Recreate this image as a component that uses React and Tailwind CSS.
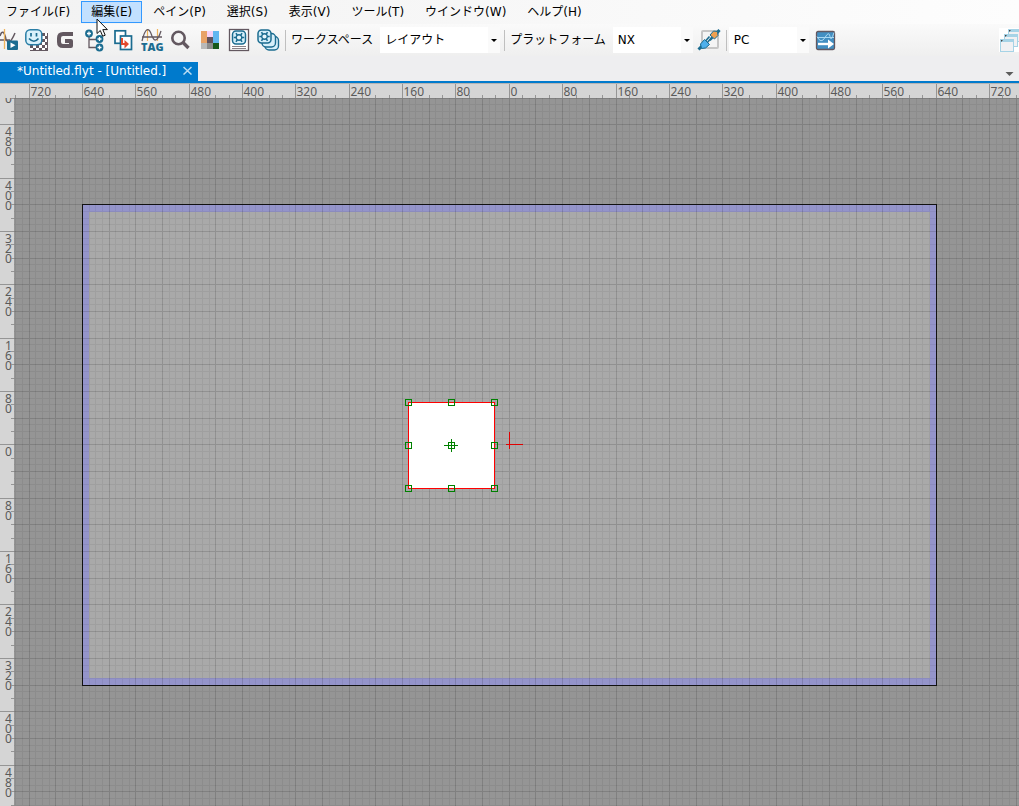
import React, { useLayoutEffect, useRef, useState } from "react";

const GRAY = "#635860";
const TEAL = "#1b6c90";

function Icon({ children }) {
  return (
    <svg className="overflow-visible" width="29" height="24" viewBox="0 0 29 24" fill="none" aria-hidden="true">
      {children}
    </svg>
  );
}

function ToolButton({ label, children }) {
  return (
    <button type="button" aria-label={label} className="h-6 w-[29px] shrink-0">
      <Icon>{children}</Icon>
    </button>
  );
}

function Plus({ x, y }) {
  return (
    <g>
      <circle cx={x} cy={y} r="3.9" fill={TEAL} />
      <path d={`M${x - 2} ${y}h4M${x} ${y - 2}v4`} stroke="#fff" strokeWidth="1.3" />
    </g>
  );
}

function Flower({ x, y }) {
  return (
    <g transform={`translate(${x} ${y})`}>
      <rect x="-6.5" y="-6.5" width="13" height="13" rx="3.5" fill="#d6effa" stroke={TEAL} strokeWidth="1.5" />
      <circle r="2.8" fill="#e8f6fc" stroke={TEAL} strokeWidth="1.4" />
      <path
        d="M-1.8-2.4l-1.2-2M1.8-2.4l1.2-2M-1.8 2.4l-1.2 2M1.8 2.4l1.2 2M-3 0h-2.2M3 0h2.2"
        stroke={TEAL}
        strokeWidth="1.6"
      />
    </g>
  );
}

const checks = [];
for (let r = 0; r < 6; r++)
  for (let c = 0; c < 6; c++) if ((r + c) % 2 === 0) checks.push([8 + c * 3, 5 + r * 3]);

const palette = [
  ["#e8a266", "#f8d2f6", "#62b6f0"],
  ["#e8a266", "#62525c", "#62b6f0"],
  ["#b9b9b9", "#8c8c8c", "#17591c"],
];

function Separator() {
  return <div className="mx-[2px] h-[21px] w-px shrink-0 bg-[#bfbfbf]" />;
}

function Combo({ id, label, options, wide }) {
  return (
    <div className={`relative mr-[2px] h-[26px] shrink-0 bg-white ${wide ? "w-[120px]" : "w-[80px]"}`}>
      <select
        id={id}
        aria-label={label}
        className="h-full w-full appearance-none bg-transparent pr-4 pl-[5px] text-[12px] text-black outline-none"
      >
        {options.map((o) => (
          <option key={o}>{o}</option>
        ))}
      </select>
      <svg
        className="pointer-events-none absolute top-0 right-0 bg-[#fafafa]"
        width="12"
        height="26"
        viewBox="0 0 12 26"
        aria-hidden="true"
      >
        <path d="M3 12h6l-3 3z" fill="#000" />
      </svg>
    </div>
  );
}

const menus = [
  "ファイル(F)",
  "編集(E)",
  "ペイン(P)",
  "選択(S)",
  "表示(V)",
  "ツール(T)",
  "ウインドウ(W)",
  "ヘルプ(H)",
];

// Canvas geometry: origin of the layout inside the drawing area and pixels per layout unit.
const OX = 495.3;
const OY = 346.9;
const SCALE = 0.667;
const RULER = 14;

const px = (origin, units) => Math.floor(origin + units * SCALE) + 0.5;

// All positions on a grid of the given step that fall inside the given length.
function marks(origin, step, length) {
  const out = [];
  const first = Math.ceil(-origin / (step * SCALE));
  for (let i = first; px(origin, i * step) < length; i++) out.push(i * step);
  return out;
}

function useSize() {
  const ref = useRef(null);
  const [size, setSize] = useState({ width: 0, height: 0 });
  useLayoutEffect(() => {
    const measure = () => {
      const r = ref.current.getBoundingClientRect();
      setSize({ width: r.width, height: r.height });
    };
    measure();
    window.addEventListener("resize", measure);
    return () => window.removeEventListener("resize", measure);
  }, []);
  return [ref, size];
}

function TopRuler() {
  const [ref, size] = useSize();
  return (
    <svg ref={ref} className="block h-[15px] w-full overflow-visible bg-[#d5d5d5]" shapeRendering="crispEdges">
      <path d={`M0 .5H${size.width}`} stroke="#b4b4b4" />
      {marks(OX, 20, size.width - RULER).map((t) => {
        const x = px(OX, t) + RULER;
        const major = t % 80 === 0;
        return (
          <g key={t}>
            <path d={`M${x} ${major ? 1 : 12}V15`} stroke="#959595" />
            {major && (
              <text x={x + 1} y="13" className="fill-[#5a5a5a] font-['Noto_Sans',sans-serif] text-[12px]">
                {Math.abs(t)}
              </text>
            )}
          </g>
        );
      })}
    </svg>
  );
}

function SideRuler() {
  const [ref, size] = useSize();
  const visible = marks(OY + 40, 20, size.height + 40);
  return (
    <svg ref={ref} className="w-[14px] shrink-0 bg-[#d5d5d5]" shapeRendering="crispEdges">
      {visible.map((t) => {
        const y = px(OY, t);
        const major = t % 80 === 0;
        return (
          <g key={t}>
            <path d={`M${major ? 0 : 11} ${y}H14`} stroke="#959595" />
            {major && (
              <text className="fill-[#5a5a5a] font-['Noto_Sans',sans-serif] text-[12px]">
                {String(Math.abs(t))
                  .split("")
                  .map((c, i) => ({ c, base: Math.floor(y) + 12 + i * 10 }))
                  .filter(({ base }) => base > 0)
                  .map(({ c, base }) => (
                    <tspan key={base} x="5" y={base}>
                      {c}
                    </tspan>
                  ))}
              </text>
            )}
          </g>
        );
      })}
    </svg>
  );
}

const box = { x: 394.5, y: 304.5, size: 86 };
const handles = [];
for (const r of [0, 1, 2]) for (const c of [0, 1, 2]) handles.push([box.x + c * 43 - 3, box.y + r * 43 - 3]);

function gridPath(step, skip, size) {
  const keep = (t) => !skip || t % skip !== 0;
  const xs = marks(OX, step, size.width).filter(keep);
  const ys = marks(OY, step, size.height).filter(keep);
  return (
    xs.map((t) => `M${px(OX, t)} 0V${size.height}`).join("") +
    ys.map((t) => `M0 ${px(OY, t)}H${size.width}`).join("")
  );
}

function Canvas() {
  const [ref, size] = useSize();
  return (
    <svg ref={ref} className="min-w-0 flex-1 bg-[#959595]" shapeRendering="crispEdges" fill="none">
      <rect x="68.5" y="106.5" width="854" height="481" fill="#9494ca" />
      <rect x="75" y="114" width="841" height="466" fill="#a9a9a9" />
      <path d={gridPath(10, 40, size)} stroke="#000" strokeOpacity=".06" />
      <path d={gridPath(40, 0, size)} stroke="#000" strokeOpacity=".14" />
      <rect x="68.5" y="106.5" width="854" height="481" stroke="#111" />
      <rect x={box.x} y={box.y} width={box.size} height={box.size} fill="#fff" stroke="#f00" />
      {handles.map(([x, y], i) => (
        <rect key={i} x={x} y={y} width="6" height="6" stroke="#008000" />
      ))}
      <path d="M430 347.5h14M437.5 341v13" stroke="#008000" />
      <path d="M492 346.5h17M495.5 334v17" stroke="#e00000" />
    </svg>
  );
}

export default function App() {
  return (
    <div className="relative flex min-h-screen flex-col overflow-hidden bg-[#eeeef0] font-['DejaVu_Sans','Noto_Sans_CJK_JP',sans-serif] text-[12px] text-black">
      <nav className="-ml-1 flex h-6 items-center gap-px bg-linear-to-r from-[#f2f2f2] to-[#fdfdfd]">
        {menus.map((m, i) => (
          <button
            key={m}
            type="button"
            className={`flex h-[22px] shrink-0 items-center border px-[9px] leading-none whitespace-nowrap ${
              i === 1 ? "border-[#3399ff] bg-[#c2e0ff]" : "border-transparent"
            }`}
          >
            {m}
          </button>
        ))}
      </nav>

      <div className="-ml-[7px] flex h-8 items-center bg-linear-to-b from-[#fafafa] to-[#efefef]">
        <ToolButton label="カーブ再生">
          <path d="M7 12h10M7 8q3-9 6 3 3 8 9-6" stroke={GRAY} strokeWidth="1.5" />
          <path d="M11.5 1v20" stroke="#efb45c" strokeWidth="1.3" />
          <rect x="14" y="12.5" width="11" height="9.5" rx="1" fill={TEAL} />
          <path d="M17.5 14.5v5.5l5-2.8z" fill="#fff" />
        </ToolButton>
        <ToolButton label="背景">
          <rect x="8" y="5" width="18" height="18" fill="#fff" />
          {checks.map(([x, y]) => (
            <rect key={`${x}-${y}`} x={x} y={y} width="3" height="3" fill={GRAY} />
          ))}
          <path d="M25.5 5v17.5H8" stroke={GRAY} />
          <rect x="3.8" y="1.8" width="16" height="15" rx="4.5" fill="#d9f1fb" stroke="#2a7ea6" strokeWidth="1.5" />
          <path d="M9 5v3.5M14.5 5v3.5M7 10.5q5 5.5 9.5 0" stroke={TEAL} strokeWidth="1.7" />
        </ToolButton>
        <ToolButton label="グラフィックス">
          <path
            d="M22 6H12Q8 6 8 10v4Q8 18 12 18h8v-5h-6"
            stroke={GRAY}
            strokeWidth="4"
            strokeLinejoin="round"
          />
        </ToolButton>
        <ToolButton label="階層">
          <path d="M9 9v10.5h7M9 11.5h7" stroke={GRAY} strokeWidth="1.3" />
          <Plus x={9} y={5.5} />
          <Plus x={19.5} y={11} />
          <Plus x={19.5} y={19.5} />
        </ToolButton>
        <ToolButton label="コピー">
          <rect x="6" y="2.8" width="10.5" height="12.5" fill="#fff" stroke={TEAL} strokeWidth="1.7" />
          <rect x="11.5" y="8" width="11" height="13.5" fill="#fff" stroke={TEAL} strokeWidth="1.7" />
          <path d="M13 10v6h5" stroke="#e2492c" strokeWidth="2" />
          <path d="M15.5 12l4.5 4-4.5 4.5z" fill="#e2492c" />
        </ToolButton>
        <ToolButton label="タグ">
          <path d="M9.5 1v12M19.5 1v12" stroke="#efb45c" strokeWidth="1.2" />
          <path d="M4 9h20M4 13Q9-7 14 8q4 10 9-5" stroke={GRAY} strokeWidth="1.3" />
          <text x="3" y="23" className="font-['Open_Sans',sans-serif] text-[11px] font-extrabold" fill={TEAL}>
            TAG
          </text>
        </ToolButton>
        <ToolButton label="検索">
          <circle cx="11.5" cy="10" r="6.2" stroke={GRAY} strokeWidth="2.6" />
          <path d="M16 14.5l5.5 5.5" stroke={GRAY} strokeWidth="3.4" />
        </ToolButton>
        <ToolButton label="カラー">
          {palette.map((row, r) =>
            row.map((c, k) => (
              <rect key={`${r}${k}`} x={5 + k * 6} y={3 + r * 6} width="6" height="6" fill={c} />
            ))
          )}
        </ToolButton>
        <ToolButton label="部品情報">
          <rect x="4.5" y="1.5" width="19" height="21" fill="#fff" stroke={GRAY} strokeWidth="1.3" />
          <Flower x={14} y={9.5} />
          <path d="M7 18.5h14M7 20.5h14" stroke="#8a8288" />
        </ToolButton>
        <ToolButton label="部品一覧">
          <rect x="11" y="8.5" width="13.5" height="13.5" rx="4" fill="#d6effa" stroke={TEAL} strokeWidth="1.4" />
          <rect x="8" y="5.5" width="13.5" height="13.5" rx="4" fill="#d6effa" stroke={TEAL} strokeWidth="1.4" />
          <Flower x={10.5} y={8.5} />
        </ToolButton>
        <Separator />
        <label htmlFor="workspace" className="shrink-0 pr-[7px] pl-[3px] whitespace-nowrap">
          ワークスペース
        </label>
        <Combo id="workspace" options={["レイアウト"]} wide />
        <Separator />
        <label htmlFor="platform" className="shrink-0 pr-[7px] pl-[3px] whitespace-nowrap">
          プラットフォーム
        </label>
        <Combo id="platform" options={["NX"]} />
        <ToolButton label="接続">
          <rect x="7" y="3" width="16" height="17" rx="1" fill="#f4f4f4" stroke="#c6c6c6" strokeWidth="2" />
          <path d="M3.5 21.5L7 18M21 6l3.5-4" stroke={TEAL} strokeWidth="3" />
          <path d="M12 15l5-6M10.500 13l4-4.500M15 12.500l3-3" stroke={TEAL} strokeWidth="1.6" />
          <path d="M5.500 16l4-4.500 5 5-4 3.500-4 .5z" fill="#4eb0ec" stroke={TEAL} />
          <path d="M15 7l3.500-4 4 .5 .5 4-3.500 3.500z" fill="#f0a050" stroke={TEAL} />
        </ToolButton>
        <Separator />
        <Combo id="target" label="接続先" options={["PC"]} />
        <ToolButton label="転送">
          <rect x="5.5" y="3.5" width="18" height="18" rx="1.5" fill="#438fc2" stroke={GRAY} strokeWidth="1.3" />
          <path d="M6 9.5h17M6 8.500q4 8 8 1 4-7 5-1 1 6 4-4" stroke="#a9d8f2" strokeWidth="1" />
          <path d="M7 16h11" stroke="#fff" strokeWidth="2.4" />
          <path d="M17 11.5l6 4.5-6 4.5z" fill="#fff" />
        </ToolButton>
        <button type="button" aria-label="ウインドウを重ねて表示" className="ml-auto h-6 w-5 shrink-0 bg-white">
          <svg width="20" height="24" viewBox="0 0 20 24" aria-hidden="true">
            {[
              [9, 1],
              [5, 6],
              [1, 11],
            ].map(([x, y]) => (
              <g key={x}>
                <rect x={x + 0.5} y={y + 0.5} width="13" height="12" fill="#f1f1f3" stroke="#a6d3e6" />
                <path d={`M${x} ${y + 1.5}h14`} stroke="#a6d3e6" strokeWidth="3" />
                <path d={`M${x + 1} ${y + 1}h2l-2 2z`} fill="#444" />
              </g>
            ))}
          </svg>
        </button>
      </div>

      <div className="flex h-[27px] items-end justify-between border-b-2 border-[#007acc]">
        <div className="flex h-[19px] w-[198px] items-center justify-between bg-[#007acc] pr-[6px] pb-[2px] pl-[17px] text-white">
          <span className="leading-none whitespace-nowrap">*Untitled.flyt - [Untitled.]</span>
          <button type="button" aria-label="閉じる" className="h-[9px] w-[9px]">
            <svg width="9" height="9" viewBox="0 0 9 9" aria-hidden="true">
              <path d="M.5 1l8 7.5M8.5 1l-8 7.5" stroke="#b9dcf2" strokeWidth="1.5" />
            </svg>
          </button>
        </div>
        <button type="button" aria-label="タブ一覧" className="mr-[5px] h-[15px] w-[9px]">
          <svg width="9" height="15" viewBox="0 0 9 15" aria-hidden="true">
            <path d="M.5 6h8l-4 4z" fill="#5c5c5c" />
          </svg>
        </button>
      </div>

      <main className="flex flex-1 flex-col">
        <TopRuler />
        <div className="flex flex-1">
          <SideRuler />
          <Canvas />
        </div>
      </main>

      <svg
        className="pointer-events-none absolute top-[18px] left-[96px]"
        width="13"
        height="20"
        viewBox="0 0 13 20"
        aria-hidden="true"
      >
        <path d="M1 1v14.5l3.3-3 2.4 5.7 2.5-1-2.4-5.6h4.6z" fill="#fff" stroke="#111" />
      </svg>
    </div>
  );
}
